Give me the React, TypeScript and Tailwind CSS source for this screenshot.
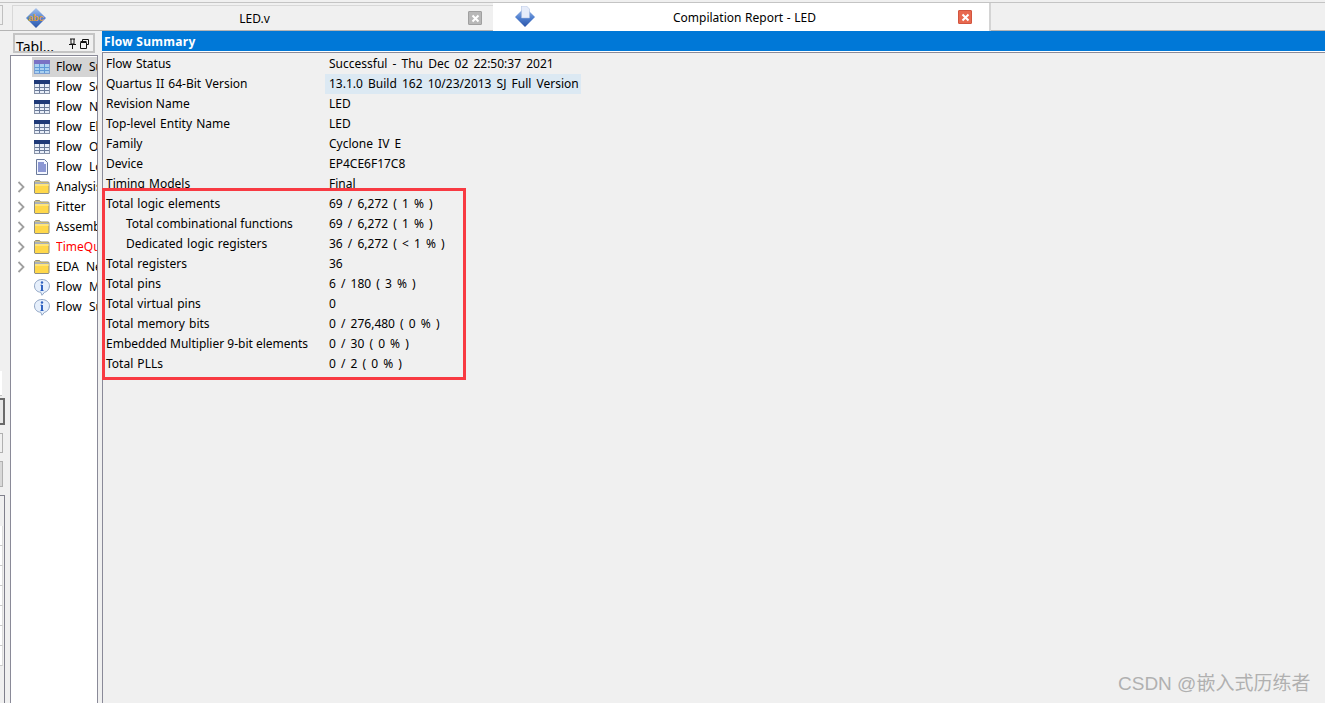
const font = "font-['Noto_Sans','Liberation_Sans',sans-serif]";

const treeItems = [
  { icon: 'table-on', label: 'Flow Summary', selected: true },
  { icon: 'table', label: 'Flow Settings' },
  { icon: 'table', label: 'Flow Non-Default' },
  { icon: 'table', label: 'Flow Elapsed Time' },
  { icon: 'table', label: 'Flow OS Summary' },
  { icon: 'doc', label: 'Flow Log' },
  { icon: 'folder', label: 'Analysis & Synthesis', arrow: true },
  { icon: 'folder', label: 'Fitter', arrow: true },
  { icon: 'folder', label: 'Assembler', arrow: true },
  { icon: 'folder', label: 'TimeQuest', arrow: true, red: true },
  { icon: 'folder', label: 'EDA Netlist', arrow: true },
  { icon: 'info', label: 'Flow Messages' },
  { icon: 'info', label: 'Flow Suppressed' },
];

const rows: { name: string; value: string; indent?: boolean; hl?: boolean; tight?: boolean }[] = [
  { name: 'Flow Status', value: 'Successful - Thu Dec 02 22:50:37 2021' },
  { name: 'Quartus II 64-Bit Version', value: '13.1.0 Build 162 10/23/2013 SJ Full Version', hl: true },
  { name: 'Revision Name', value: 'LED', tight: true },
  { name: 'Top-level Entity Name', value: 'LED' },
  { name: 'Family', value: 'Cyclone IV E' },
  { name: 'Device', value: 'EP4CE6F17C8' },
  { name: 'Timing Models', value: 'Final' },
  { name: 'Total logic elements', value: '69 / 6,272 ( 1 % )' },
  { name: 'Total combinational functions', value: '69 / 6,272 ( 1 % )', indent: true, tight: true },
  { name: 'Dedicated logic registers', value: '36 / 6,272 ( < 1 % )', indent: true },
  { name: 'Total registers', value: '36' },
  { name: 'Total pins', value: '6 / 180 ( 3 % )' },
  { name: 'Total virtual pins', value: '0' },
  { name: 'Total memory bits', value: '0 / 276,480 ( 0 % )' },
  { name: 'Embedded Multiplier 9-bit elements', value: '0 / 30 ( 0 % )', tight: true },
  { name: 'Total PLLs', value: '0 / 2 ( 0 % )' },
];

function TableIcon({ on }: { on?: boolean }) {
  return (
    <svg width="16" height="14" viewBox="0 0 16 14">
      <rect x="0" y="0" width="16" height="14" fill={on ? '#7f9fd0' : '#8a94a8'} />
      <rect x="1" y="1" width="14" height="12" fill={on ? '#a9d0f0' : '#e8eef8'} />
      <rect x="0" y="0" width="16" height="4" fill={on ? '#7a72c4' : '#1f3a78'} />
      <path d="M1 7.500h14M1 10.500h14M5.500 4v9M10.500 4v9" stroke={on ? '#5f9ad8' : '#6a7a98'} fill="none" />
    </svg>
  );
}

function DocIcon() {
  return (
    <svg width="14" height="16" viewBox="0 0 14 16">
      <path d="M1.500.5h8l3 3v12h-11z" fill="#f4f7ff" stroke="#6a7a9a" />
      <path d="M3 4h6M3 6h8M3 8h8M3 10h8M3 12h8" stroke="#2438a8" fill="none" />
    </svg>
  );
}

function FolderIcon() {
  return (
    <svg width="16" height="14" viewBox="0 0 16 14">
      <path d="M.5 3V1.500l1-1h4l1 1.500h8l.5 1V13l-.5.5H1L.5 13z" fill="#ffd84a" stroke="#8e8f86" />
      <path d="M1 1.500h4.500L6.500 3H15v1H1z" fill="#aab2bc" />
      <path d="M1 5h14" stroke="#fff2a8" fill="none" />
    </svg>
  );
}

function InfoIcon() {
  return (
    <svg width="16" height="17" viewBox="0 0 16 17">
      <path d="M8 .5c4.200 0 7.500 2.800 7.500 6.300S12.800 13 10.500 13.300L8 16.300 6.800 13.300C3 13 .5 10.500.5 6.800S3.800.5 8 .5z" fill="#e6effb" stroke="#8fa4c4" />
      <circle cx="8" cy="3.500" r="1.200" fill="#2f62c0" />
      <path d="M8 6v5.500" stroke="#2f62c0" strokeWidth="2" fill="none" />
      <path d="M6.500 6.200h1.500M6.500 11.500h3" stroke="#2f62c0" fill="none" />
    </svg>
  );
}

function Arrow() {
  return (
    <svg width="8" height="12" viewBox="0 0 8 12">
      <path d="M1.500 1l5 5-5 5" stroke="#a0a0a0" strokeWidth="1.800" fill="none" />
    </svg>
  );
}

function Diamond({ kind }: { kind: 'abc' | 'doc' }) {
  return (
    <svg width="22" height="22" viewBox="0 0 22 22">
      <defs>
        <linearGradient id={`dia-${kind}`} x1="0" y1="0" x2="0" y2="1">
          <stop offset="0" stopColor="#a9c3ec" />
          <stop offset="0.55" stopColor="#4f7fcf" />
          <stop offset="1" stopColor="#2c55a8" />
        </linearGradient>
      </defs>
      <path d="M11 1l10 10-10 10L1 11z" fill={`url(#dia-${kind})`} />
      {kind === 'doc' && <path d="M7.500 0h5l3 3v9H7.500z" fill="#e6ecfa" stroke="#a4b8dc" strokeWidth="0.500" />}
      {kind === 'abc' && (
        <text x="11" y="13.500" textAnchor="middle" fontSize="9" fontWeight="700" fontFamily="'Liberation Sans', sans-serif" fill="#e0a038">
          abc
        </text>
      )}
    </svg>
  );
}

function CloseBox({ red }: { red?: boolean }) {
  return (
    <div className={`flex h-[14px] w-[14px] items-center justify-center rounded-[1px] border ${red ? 'border-[#d2553f] bg-[#e8694f]' : 'border-[#a0a0a0] bg-[#b8b8b8]'}`}>
      <svg width="9" height="9" viewBox="0 0 9 9">
        <path d="M1.500 1.500l6 6M7.500 1.500l-6 6" stroke="#fff" strokeWidth="2" fill="none" />
      </svg>
    </div>
  );
}

export default function App() {
  return (
    <div className={`${font} relative flex h-[703px] w-[1325px] flex-col overflow-hidden bg-[#f0f0f0] text-[12px] text-black`}>
      {/* tab strip */}
      <div className="flex h-[31px] shrink-0 pt-[2px]">
        <div className="flex min-w-0 flex-1 border-t border-b border-t-[#c4c4c4] border-b-[#b4b4b4]">
          <div className="w-[12px] shrink-0 pt-[2px]">
            <div className="h-[20px] w-[3px] border-y border-r border-[#c0c0c0]" />
          </div>
          <div className="mt-[2px] flex h-[25px] w-[481px] shrink-0 items-center border-l border-t border-[#d8d8d8] pl-[12px] pr-[11px]">
            <Diamond kind="abc" />
            <span className="flex-1 pr-[6px] pt-[1px] text-center">LED.v</span>
            <CloseBox />
          </div>
          <div className="-mb-[1px] flex w-[498px] shrink-0 items-center border-r-2 border-[#d4d4d4] bg-white pl-[21px] pr-[17px]">
            <Diamond kind="doc" />
            <span className="flex-1 pr-[5px] pt-[2px] text-center [word-spacing:0.5px]">Compilation Report - LED</span>
            <CloseBox red />
          </div>
        </div>
      </div>

      <div className="flex min-h-0 flex-1">
        {/* cut-off panel on the far left */}
        <div className="flex w-[10px] shrink-0 flex-col">
          <div className="mt-[340px] h-[25px] w-[2px] border-b border-[#c0c0c0] bg-white" />
          <div className="mt-[2px] h-[27px] w-[5px] border-y-2 border-r-2 border-[#6a6a6a] bg-[#e8e8e8]" />
          <div className="mt-[8px] h-[20px] w-[3px] border-y border-r border-[#b0b0b0]" />
          <div className="mt-[8px] h-[26px] w-[3px] border-y border-r border-[#b0b0b0] bg-[#d8d8d8]" />
          <div className="mt-[8px] w-[5px] flex-1 border-t border-r border-[#80808c] pt-[30px]">
            {[0, 1, 2, 3, 4, 5, 6].map((i) => (
              <div key={i} className="h-[20px] w-[3px] border-b border-[#cccccc] border-r border-r-[#dddddd] bg-white" />
            ))}
          </div>
        </div>

        {/* report tree */}
        <div className="flex w-[88px] shrink-0 flex-col">
          <div className="ml-[3px] mt-[2px] flex h-[20px] w-[82px] items-start overflow-hidden border-2 border-[#c4c4c4] pl-[1px]">
            <span className="flex-1 pt-[2px] text-[14px] leading-[19px]">Tabl...</span>
            <svg width="24" height="12" viewBox="0 0 24 12" className="mr-[2px] mt-[3px]">
              <path d="M3 1h5M4 1v5h3V1M2 6.500h7M5.500 7v4" stroke="#111" fill="none" />
              <path d="M15.500 3.500V1.500h6v5h-2" stroke="#111" fill="none" />
              <path d="M13.500 4.500h6v6h-6z" stroke="#111" fill="none" />
              <path d="M13.500 3.500h6" stroke="#111" strokeWidth="1" fill="none" />
            </svg>
          </div>
          <div className="mt-[2px] min-h-0 flex-1 border-x-[1.5px] border-t border-[#8a8a98] bg-white">
            <div className="overflow-hidden pt-[1px]">
              {treeItems.map((item) => (
                <div key={item.label} className="flex h-[20px] items-center pl-[5px]">
                  <div className="flex w-[16px] shrink-0 items-center pl-[1px]">{item.arrow && <Arrow />}</div>
                  <div className={`flex h-[20px] min-w-0 flex-1 items-center ${item.selected ? 'bg-[#d4d4d4]' : ''}`}>
                    <div className="flex w-[24px] shrink-0 items-center justify-center pr-[5px]">
                      {item.icon === 'table-on' && <TableIcon on />}
                      {item.icon === 'table' && <TableIcon />}
                      {item.icon === 'doc' && <DocIcon />}
                      {item.icon === 'folder' && <FolderIcon />}
                      {item.icon === 'info' && <InfoIcon />}
                    </div>
                    <span className={`overflow-hidden whitespace-nowrap [word-spacing:4px] ${item.red ? 'text-[#ff0000]' : ''}`}>{item.label}</span>
                  </div>
                </div>
              ))}
            </div>
          </div>
        </div>

        <div className="w-[4px] shrink-0" />

        {/* summary */}
        <div className="flex min-w-0 flex-1 flex-col">
          <div className="flex h-[21px] shrink-0 items-center border-b border-white bg-[#0078d7] pl-[2px] pt-[1px] font-bold tracking-[0.3px] text-white">Flow Summary</div>
          <div className="min-h-0 flex-1 border-l-[1.5px] border-t border-[#8a8a98] pl-[3px] pt-[1px]">
            {rows.map((r) => (
              <div key={r.name} className="flex h-[20px] items-center whitespace-nowrap">
                <span className={`w-[223px] shrink-0 ${r.indent ? 'pl-[20px]' : ''} ${r.tight ? '' : '[word-spacing:1px]'}`}>{r.name}</span>
                {r.hl ? (
                  <span className="-ml-[4px] flex h-[20px] items-center bg-[#dce9f3] pl-[4px] pr-[2px] [word-spacing:2px]">{r.value}</span>
                ) : (
                  <span className="[word-spacing:2px]">{r.value}</span>
                )}
              </div>
            ))}
          </div>
        </div>
      </div>

      {/* red annotation box drawn over the table */}
      <div className="absolute left-[102px] top-[188px] h-[192px] w-[364px] border-[3px] border-[#f83a42]" />

      {/* watermark */}
      <div className="absolute left-[1118px] top-[670px] font-['Liberation_Sans','Noto_Sans_CJK_SC',sans-serif] text-[19px] text-[#b0b0b0]">CSDN @嵌入式历练者</div>
    </div>
  );
}
